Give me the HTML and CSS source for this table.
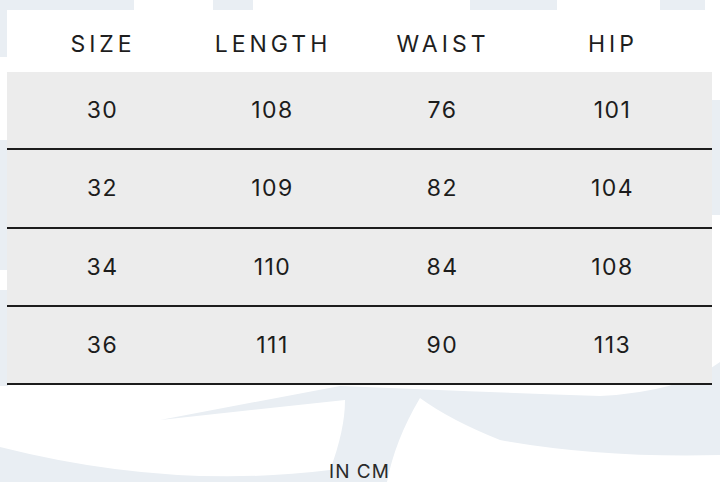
FILE: index.html
```html
<!DOCTYPE html>
<html lang="en">
<head>
<meta charset="utf-8">
<title>Size chart</title>
<link rel="stylesheet" href="styles.css">
</head>
<body>
<svg class="watermark" width="720" height="482" viewBox="0 0 720 482" aria-hidden="true">
  <g fill="#e9eef3">
    <path d="M0 0H134V12H0Z"/>
    <path d="M0 0H8V57H0Z"/>
    <path d="M213 0H253V12H213Z"/>
    <path d="M470 0H557V12H470Z"/>
    <path d="M660 0H705V12H660Z"/>
    <path d="M0 140H8V270H0Z"/>
    <path d="M0 290H8V386H0Z"/>
    <path d="M711 100H720V215H711Z"/>
    <path d="M160 420 L340 386 Q480 392 600 396 Q680 392 720 362 V455 Q600 458 500 440 Q450 420 420 398 Q395 440 387 482 H0 V447 Q170 490 330 470 Q345 430 345 400 Z"/>
  </g>
</svg>
<main class="sheet">
  <div class="chart">
    <div class="row head">
      <span class="cell">SIZE</span>
      <span class="cell">LENGTH</span>
      <span class="cell">WAIST</span>
      <span class="cell">HIP</span>
    </div>
    <div class="row data">
      <span class="cell">30</span>
      <span class="cell">108</span>
      <span class="cell">76</span>
      <span class="cell">101</span>
    </div>
    <div class="row data">
      <span class="cell">32</span>
      <span class="cell">109</span>
      <span class="cell">82</span>
      <span class="cell">104</span>
    </div>
    <div class="row data">
      <span class="cell">34</span>
      <span class="cell">110</span>
      <span class="cell">84</span>
      <span class="cell">108</span>
    </div>
    <div class="row data">
      <span class="cell">36</span>
      <span class="cell">111</span>
      <span class="cell">90</span>
      <span class="cell">113</span>
    </div>
  </div>
  <p class="unit">IN CM</p>
</main>
</body>
</html>
```
FILE: styles.css
```css
html, body {
  margin: 0;
  padding: 0;
}
body {
  width: 720px;
  height: 482px;
  overflow: hidden;
  position: relative;
  background: #ffffff;
  font-family: "Inter", "DejaVu Sans", sans-serif;
  color: #1c1c1c;
}
.watermark {
  position: absolute;
  left: 0;
  top: 0;
  z-index: 0;
  display: block;
}
.sheet {
  position: relative;
  z-index: 1;
  padding: 10px 8px 0 7px;
}
.chart {
  background: #ffffff;
  width: 705px;
}
.row {
  display: grid;
  grid-template-columns: repeat(4, 170px);
  padding: 0 15px 0 10px;
  align-items: center;
  justify-items: center;
  box-sizing: border-box;
}
.head {
  height: 62px;
  padding-top: 5px;
  font-size: 23px;
  letter-spacing: 4px;
  color: #1e1e1e;
}
.head .cell {
  padding-left: 2px;
}
.data {
  height: 78.33px;
  background: #ececec;
  border-bottom: 2px solid #1c1c1c;
  font-size: 23px;
  letter-spacing: 1.5px;
}
.data .cell {
  padding-left: 1px;
}
.cell {
  line-height: 28px;
}
.unit {
  margin: 78px 0 0;
  width: 705px;
  text-align: center;
  font-size: 19px;
  line-height: 18px;
  letter-spacing: 1px;
  color: #2a2a2a;
}
```
